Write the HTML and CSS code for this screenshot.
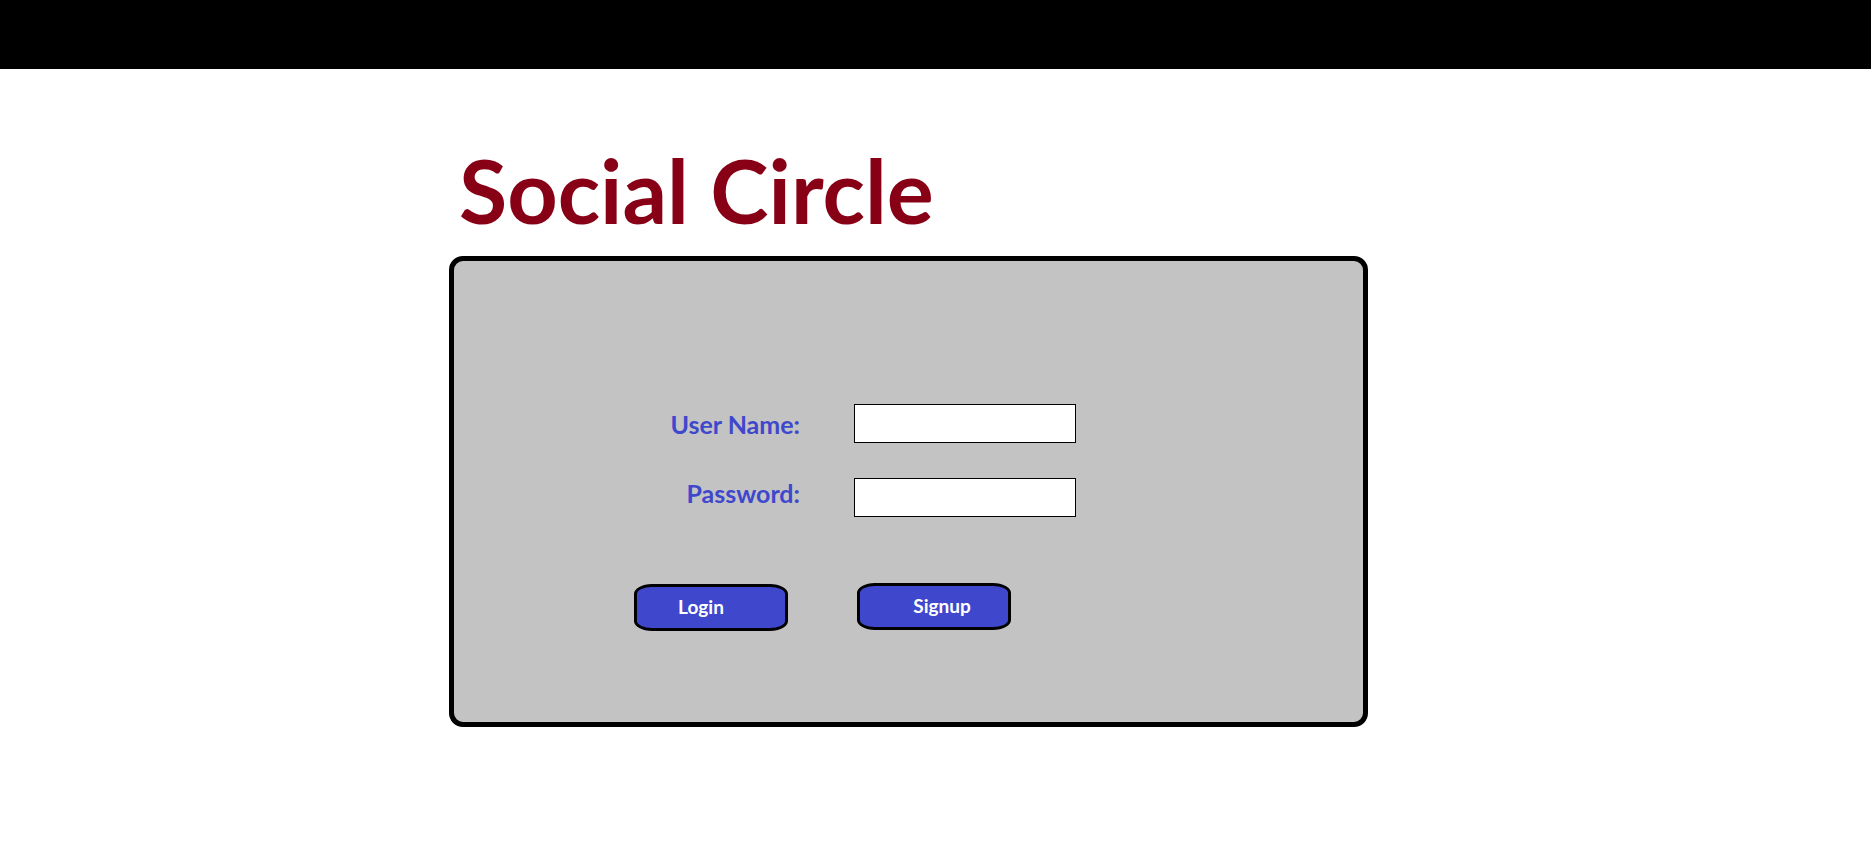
FILE: index.html
```html
<!DOCTYPE html>
<html>
<head>
<meta charset="utf-8">
<link rel="stylesheet" href="styles.css">
</head>
<body>
<div class="topbar"></div>
<main class="page">
  <h1 class="title">Social Circle</h1>
  <section class="card">
    <div class="form">
      <label class="label label-user">User Name:</label>
      <div class="input"></div>
      <label class="label label-pass">Password:</label>
      <div class="input"></div>
    </div>
    <div class="actions">
      <button class="btn btn-login">Login</button>
      <button class="btn btn-signup">Signup</button>
    </div>
  </section>
</main>
</body>
</html>
```
FILE: styles.css
```css
html, body {
  margin: 0;
  padding: 0;
  background: #ffffff;
}
body {
  font-family: "Lato", "Open Sans", sans-serif;
}
.topbar {
  height: 69px;
  background: #000000;
}
.page {
  padding-left: 449px;
}
.title {
  margin: 0;
  padding-left: 10px;
  padding-top: 77px;
  height: 187px;
  box-sizing: border-box;
  font-size: 88px;
  line-height: 1;
  font-weight: 700;
  color: #880015;
  letter-spacing: 0;
}
.card {
  box-sizing: border-box;
  width: 919px;
  height: 471px;
  border: 5px solid #000;
  border-radius: 14px;
  background: #c3c3c3;
  padding-top: 143px;
  padding-left: 146px;
}
.form {
  display: grid;
  grid-template-columns: 200px 222px;
  column-gap: 54px;
  row-gap: 35px;
  align-items: center;
}
.label {
  text-align: right;
  font-size: 25px;
  font-weight: 700;
  color: #3f48cc;
}
.label-pass {
  position: relative;
  top: -5px;
}
.input {
  box-sizing: border-box;
  height: 39px;
  background: #fff;
  border: 1.5px solid #000;
}
.actions {
  display: flex;
  gap: 69px;
  margin-top: 67px;
  margin-left: 34px;
}
.btn {
  box-sizing: border-box;
  width: 154px;
  height: 47px;
  border: 3px solid #000;
  border-radius: 18px / 10px;
  background: #3f48cc;
  color: #fff;
  font-family: "Lato", "Open Sans", sans-serif;
  font-size: 19px;
  font-weight: 700;
  padding: 0 0 2px 0;
}
.btn-login {
  padding-right: 20px;
}
.btn-signup {
  margin-top: -1px;
  padding-left: 16px;
}
```
